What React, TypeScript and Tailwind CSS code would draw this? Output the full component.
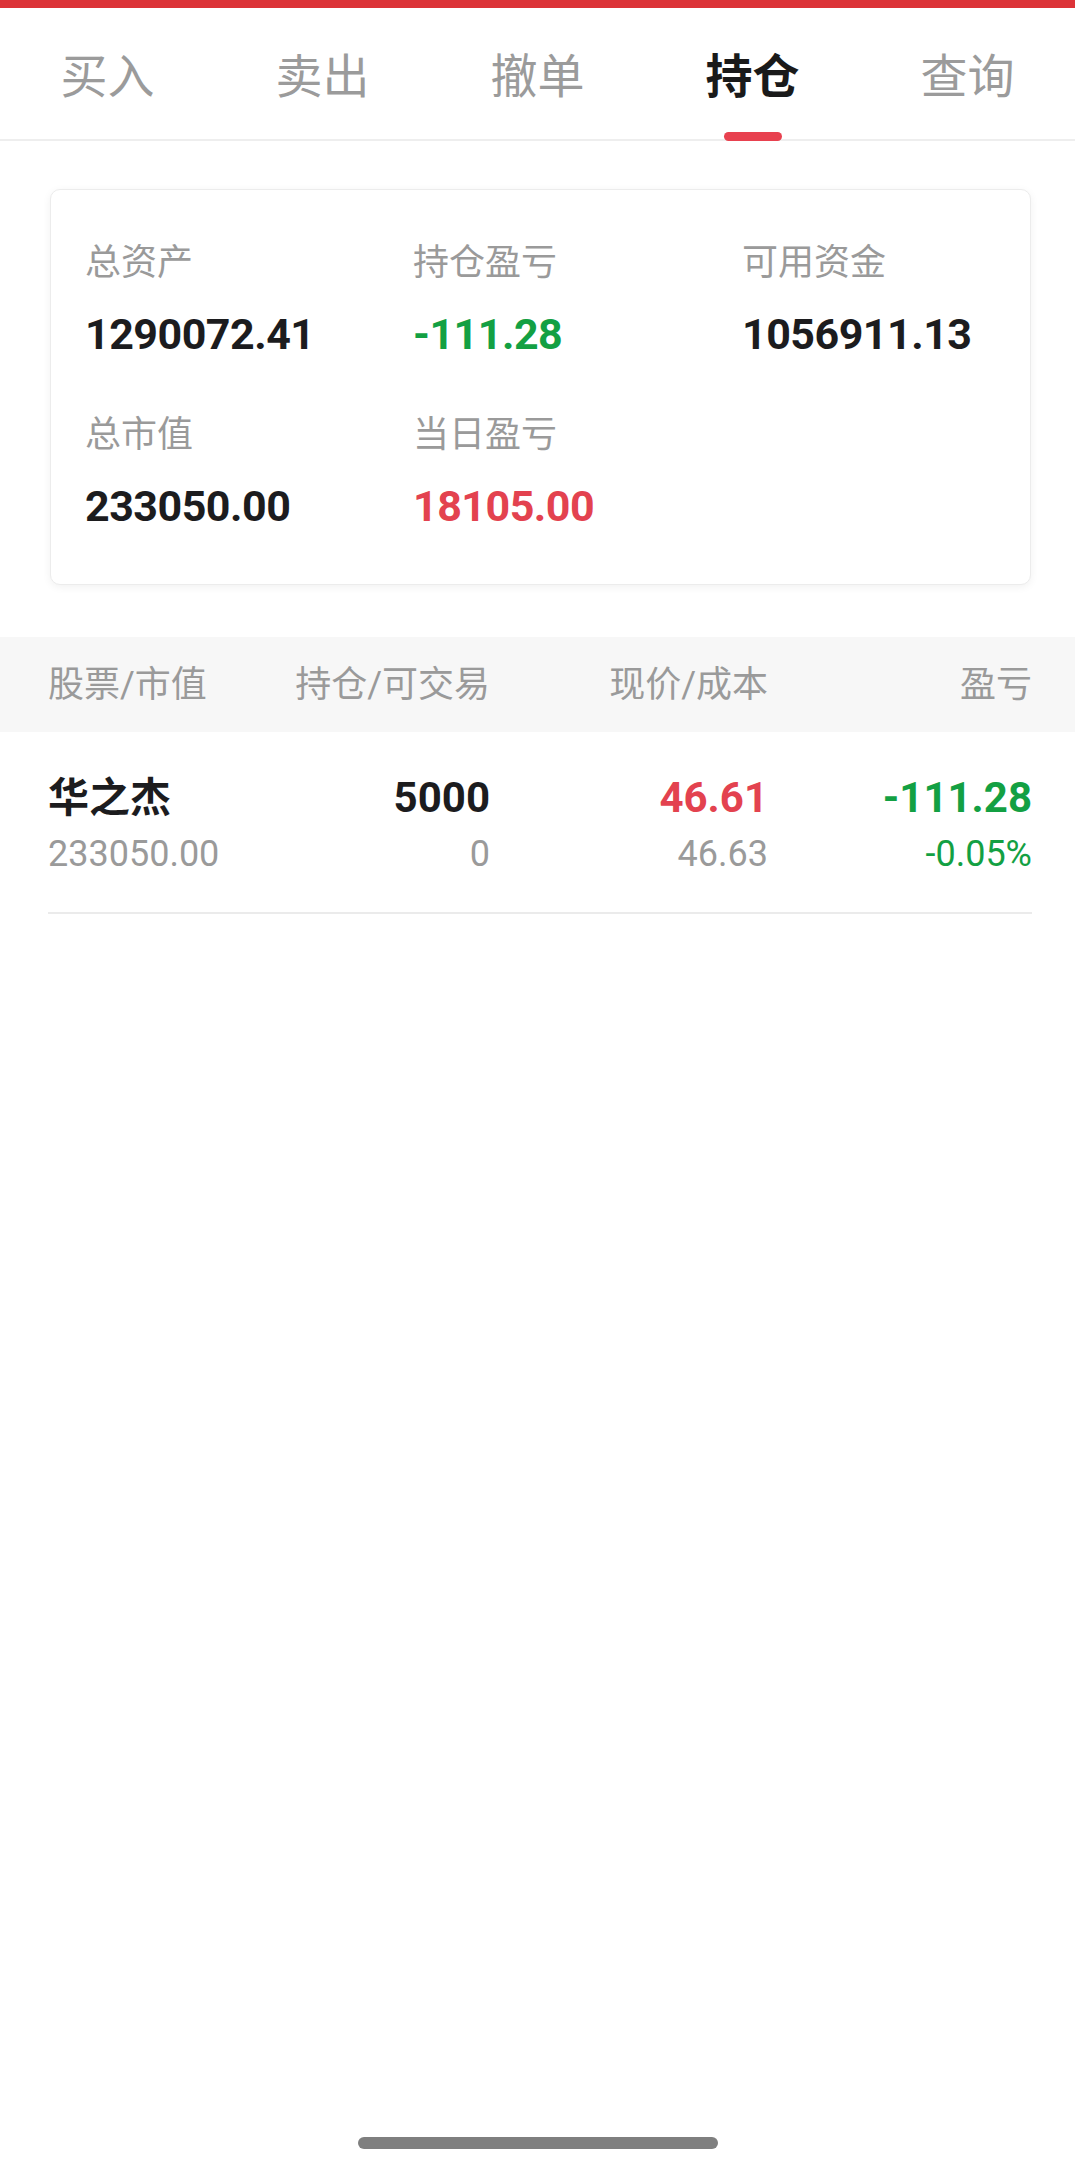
const FONT = { fontFamily: 'Roboto, "Noto Sans CJK SC", sans-serif' };

const tabs = ["买入", "卖出", "撤单", "持仓", "查询"];

type Stat = { label: string; value: string; color: string };

const stats: Stat[] = [
    { label: "总资产", value: "1290072.41", color: "text-[#1c1c1e]" },
    { label: "持仓盈亏", value: "-111.28", color: "text-[#13a043]" },
    { label: "可用资金", value: "1056911.13", color: "text-[#1c1c1e]" },
    { label: "总市值", value: "233050.00", color: "text-[#1c1c1e]" },
    { label: "当日盈亏", value: "18105.00", color: "text-[#e3424f]" },
];

const TabBar = () => (
    <div className="flex h-[133px] border-b-2 border-[#eeeeee]">
        {tabs.map((t) => {
            const active = t === "持仓";
            return (
                <div key={t} className="relative flex flex-1 items-center justify-center pt-[6px]">
                    <span
                        className={
                            active
                                ? "text-[47px] leading-[56px] font-bold text-[#1a1a1a]"
                                : "text-[47px] leading-[56px] text-[#9b9b9b]"
                        }
                    >
                        {t}
                    </span>
                    {active && (
                        <div className="absolute bottom-[-2px] left-1/2 h-[9px] w-[58px] -translate-x-1/2 rounded-full bg-[#e8414f]" />
                    )}
                </div>
            );
        })}
    </div>
);

const AssetCard = () => (
    <div className="ml-[50px] mr-[44px] mt-[48px] h-[396px] rounded-[10px] border border-[#ececec] bg-white pl-[34px] pt-[53px] shadow-[0_2px_8px_rgba(0,0,0,0.06)]">
        <div className="grid grid-cols-[328px_329px_1fr] gap-y-[56px]">
            {stats.map((s) => (
                <div key={s.label} className="flex flex-col">
                    <span className="text-[36px] leading-[40px] text-[#9a9a9a]">{s.label}</span>
                    <span className={`mt-[26px] text-[43px] leading-[50px] font-bold tracking-[-0.5px] ${s.color}`}>
                        {s.value}
                    </span>
                </div>
            ))}
        </div>
    </div>
);

const HoldingTable = () => (
    <div className="mt-[52px]">
        <div className="grid h-[95px] grid-cols-[200px_242px_278px_264px] items-center bg-[#f7f7f7] pl-[48px] pr-[43px] text-[36px] leading-[40px] text-[#9a9a9a]">
            <span>股票/市值</span>
            <span className="text-right">持仓/可交易</span>
            <span className="text-right">现价/成本</span>
            <span className="text-right">盈亏</span>
        </div>
        <div className="ml-[48px] mr-[43px] grid grid-cols-[200px_242px_278px_264px] border-b-2 border-[#ebebeb] pb-[38px] pt-[42px]">
            <div className="flex flex-col">
                <span className="text-[41px] leading-[48px] font-bold text-[#1c1c1e]">华之杰</span>
                <span className="mt-[12px] text-[36px] leading-[40px] text-[#9a9a9a]">233050.00</span>
            </div>
            <div className="flex flex-col items-end">
                <span className="text-[42px] leading-[48px] font-bold text-[#1c1c1e]">5000</span>
                <span className="mt-[12px] text-[36px] leading-[40px] text-[#9a9a9a]">0</span>
            </div>
            <div className="flex flex-col items-end">
                <span className="text-[42px] leading-[48px] font-bold text-[#e3424f]">46.61</span>
                <span className="mt-[12px] text-[36px] leading-[40px] text-[#9a9a9a]">46.63</span>
            </div>
            <div className="flex flex-col items-end">
                <span className="text-[42px] leading-[48px] font-bold text-[#13a043]">-111.28</span>
                <span className="mt-[12px] text-[36px] leading-[40px] text-[#13a043]">-0.05%</span>
            </div>
        </div>
    </div>
);

export default function App() {
    return (
        <div className="flex h-[2170px] w-[1075px] flex-col bg-white" style={FONT}>
            <div className="h-[8px] bg-[#dc3338]" />
            <TabBar />
            <AssetCard />
            <HoldingTable />
            <div className="flex-1" />
            <div className="mx-auto mb-[21px] h-[12px] w-[360px] rounded-full bg-[#7f7f7f]" />
        </div>
    );
}
